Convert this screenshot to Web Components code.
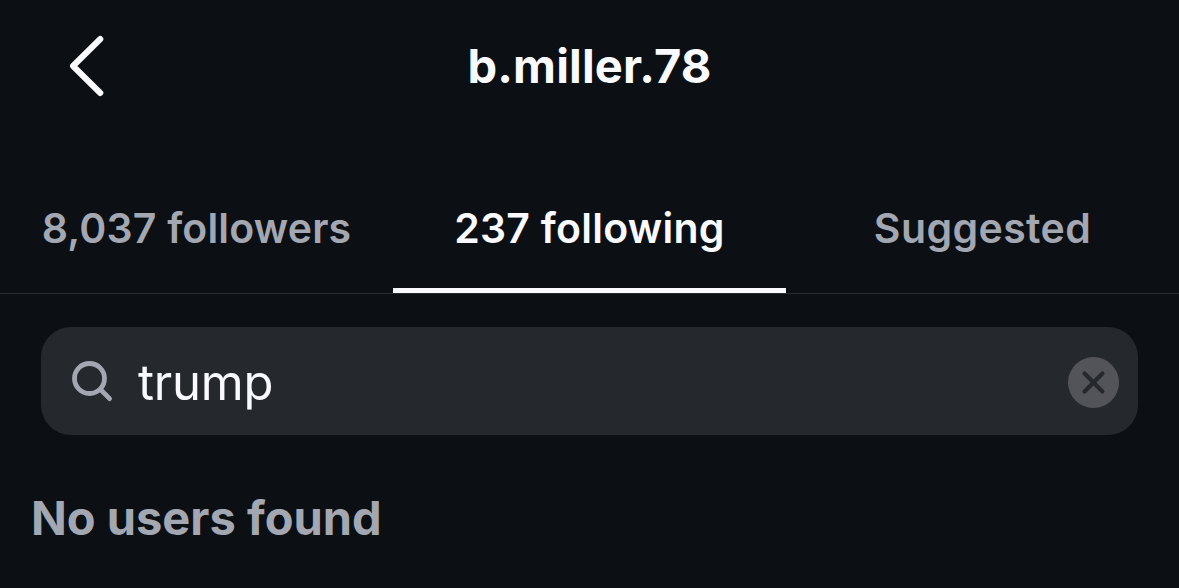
<!DOCTYPE html>
<html lang="en">
<head>
<meta charset="utf-8">
<title>b.miller.78</title>
<style>
  body {
    margin: 0;
    background: #0c0f14;
  }
</style>
</head>
<body>
<follow-screen>
  <nav-header slot="header">b.miller.78</nav-header>
  <tab-bar slot="tabs">
    <tab-item style="--tab-spacing: 0.18px">8,037 followers</tab-item>
    <tab-item selected style="--tab-spacing: 0.26px">237 following</tab-item>
    <tab-item>Suggested</tab-item>
  </tab-bar>
  <search-field value="trump"></search-field>
  <empty-message>No users found</empty-message>
</follow-screen>

<script>
/**
 * <follow-screen> Page shell, holds the theme colours.
 */
class FollowScreen extends HTMLElement {
  constructor() {
    super();
    this.attachShadow({ mode: 'open' });
    this.shadowRoot.innerHTML = `
      <style>
        :host {
          --text: #f9fafd;
          --muted: #a3a7b2;
          --field: #25282d;
          --line: #292c30;

          display: flex;
          flex-direction: column;
          box-sizing: border-box;
          height: 588px;
          overflow: hidden;
          background: #0c0f14;
          color: var(--text);
          font-family: Inter, 'Liberation Sans', sans-serif;
        }

        main {
          display: flex;
          flex-direction: column;
          padding: 33px 41px 0;
        }
      </style>
      <slot name="header"></slot>
      <slot name="tabs"></slot>
      <main><slot></slot></main>
    `;
  }
}

/**
 * <nav-header> Back chevron with a centred title.
 */
class NavHeader extends HTMLElement {
  constructor() {
    super();
    this.attachShadow({ mode: 'open' });
    this.shadowRoot.innerHTML = `
      <style>
        :host {
          display: grid;
          grid-template-columns: 140px 1fr 140px;
          align-items: center;
          height: 132px;
        }

        button {
          display: flex;
          padding: 0 0 0 60px;
          border: none;
          background: none;
          color: inherit;
        }

        h1 {
          margin: 0;
          font-size: 47px;
          font-weight: 650;
          line-height: 60px;
          letter-spacing: var(--title-spacing, 0.15px);
          text-align: center;
          white-space: nowrap;
        }
      </style>
      <button aria-label="Back">
        <svg width="50" height="68" viewBox="0 0 50 68" fill="none" stroke="currentColor"
             stroke-width="6" stroke-linecap="round" stroke-linejoin="round">
          <path d="M40.3 7 L13 34 L40.3 61"/>
        </svg>
      </button>
      <h1><slot></slot></h1>
    `;
  }
}

/**
 * <tab-bar> Equal-width row of <tab-item> above a hairline.
 */
class TabBar extends HTMLElement {
  constructor() {
    super();
    this.attachShadow({ mode: 'open' });
    this.shadowRoot.innerHTML = `
      <style>
        :host {
          display: grid;
          grid-template-columns: repeat(3, 1fr);
          box-sizing: border-box;
          height: 162px;
          padding-top: 30px;
          border-bottom: 1px solid var(--line);
        }
      </style>
      <slot></slot>
    `;
  }
}

/**
 * <tab-item> One tab, underlined when it has the selected attribute.
 */
class TabItem extends HTMLElement {
  constructor() {
    super();
    this.attachShadow({ mode: 'open' });
    this.shadowRoot.innerHTML = `
      <style>
        :host {
          display: flex;
          justify-content: center;
          box-sizing: border-box;
          padding-top: 41px;
          border-bottom: 5px solid transparent;
          color: var(--muted);
          font-size: 41px;
          font-weight: 600;
          line-height: 50px;
          letter-spacing: var(--tab-spacing, 0.4px);
          white-space: nowrap;
        }

        :host([selected]) {
          border-bottom-color: var(--text);
          color: var(--text);
        }
      </style>
      <span><slot></slot></span>
    `;
  }
}

/**
 * <search-field> Rounded search input with a clear button.
 */
class SearchField extends HTMLElement {
  constructor() {
    super();
    this.attachShadow({ mode: 'open' });
  }

  connectedCallback() {
    this.render();
  }

  get value() {
    return this.getAttribute('value') || '';
  }

  render() {
    this.shadowRoot.innerHTML = `
      <style>
        :host {
          display: flex;
          align-items: center;
          box-sizing: border-box;
          height: 108px;
          padding: 0 19px 0 29px;
          border-radius: 30px;
          background: var(--field);
        }

        .glass {
          flex: none;
          color: var(--muted);
        }

        .query {
          flex: 1;
          padding: 4px 0 0 24px;
          font-size: 49px;
          line-height: 60px;
          letter-spacing: var(--query-spacing, -0.2px);
        }

        button {
          display: flex;
          padding: 3px 0 0;
          border: none;
          background: none;
        }
      </style>
      <svg class="glass" width="44" height="44" viewBox="0 0 44 44" fill="none"
           stroke="currentColor" stroke-width="4.8" stroke-linecap="round">
        <circle cx="19.5" cy="19.5" r="15"/>
        <path d="M30.5 30.5 L39.6 39.6"/>
      </svg>
      <span class="query">${this.value}</span>
      <button aria-label="Clear">
        <svg width="51" height="51" viewBox="0 0 51 51">
          <circle cx="25.5" cy="25.5" r="25.5" fill="#525459"/>
          <path d="M16.6 16.6 L34.4 34.4 M34.4 16.6 L16.6 34.4" fill="none"
                stroke="#25282d" stroke-width="4.2" stroke-linecap="round"/>
        </svg>
      </button>
    `;
  }
}

/**
 * <empty-message> Shown in place of the results.
 */
class EmptyMessage extends HTMLElement {
  constructor() {
    super();
    this.attachShadow({ mode: 'open' });
    this.shadowRoot.innerHTML = `
      <style>
        :host {
          display: block;
          margin: 53px 0 0 -10px;
          color: var(--muted);
          font-size: 47px;
          font-weight: 700;
          line-height: 60px;
          letter-spacing: var(--message-spacing, 0);
        }
      </style>
      <slot></slot>
    `;
  }
}

customElements.define('follow-screen', FollowScreen);
customElements.define('nav-header', NavHeader);
customElements.define('tab-bar', TabBar);
customElements.define('tab-item', TabItem);
customElements.define('search-field', SearchField);
customElements.define('empty-message', EmptyMessage);
</script>
</body>
</html>
